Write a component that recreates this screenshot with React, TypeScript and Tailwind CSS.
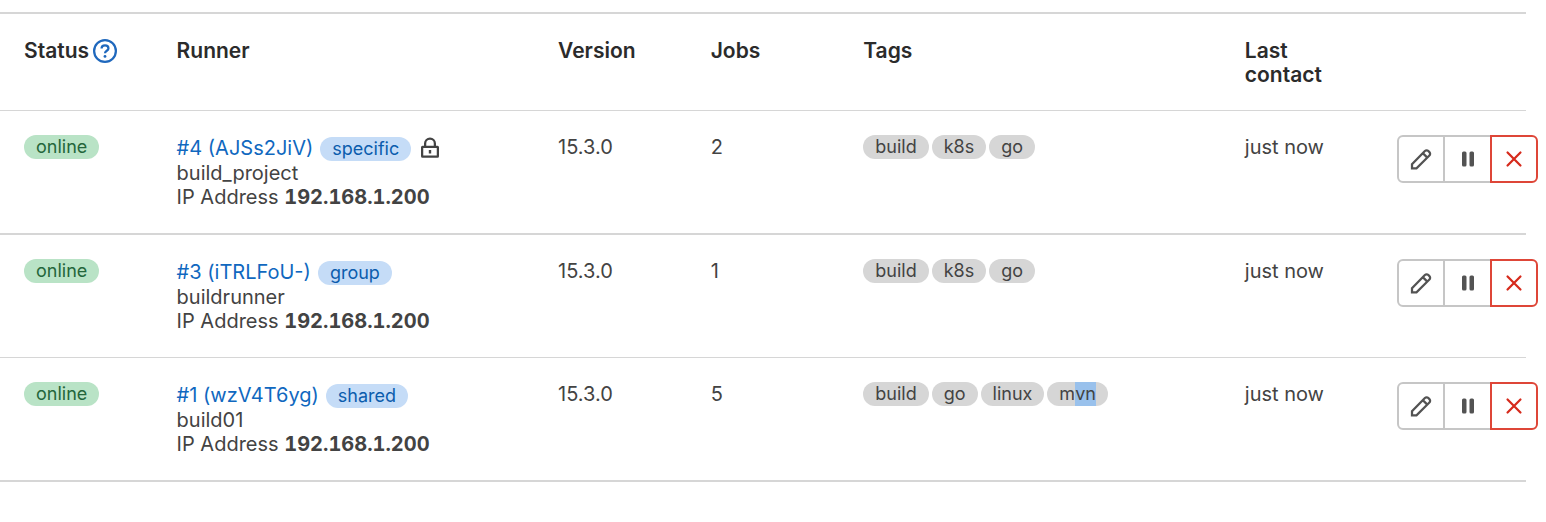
import React from "react";
import clsx from "clsx";

interface Runner {
  id: number;
  token: string;
  type: string;
  locked?: boolean;
  description: string;
  ip: string;
  version: string;
  jobs: number;
  tags: string[];
}

const runners: Runner[] = [
  {
    id: 4,
    token: "AJSs2JiV",
    type: "specific",
    locked: true,
    description: "build_project",
    ip: "192.168.1.200",
    version: "15.3.0",
    jobs: 2,
    tags: ["build", "k8s", "go"],
  },
  {
    id: 3,
    token: "iTRLFoU-",
    type: "group",
    description: "buildrunner",
    ip: "192.168.1.200",
    version: "15.3.0",
    jobs: 1,
    tags: ["build", "k8s", "go"],
  },
  {
    id: 1,
    token: "wzV4T6yg",
    type: "shared",
    description: "build01",
    ip: "192.168.1.200",
    version: "15.3.0",
    jobs: 5,
    tags: ["build", "go", "linux", "mvn"],
  },
];

const columns = [
  { label: "Status", width: "w-[10%]" },
  { label: "Runner", width: "w-[25%]" },
  { label: "Version", width: "w-[10%]" },
  { label: "Jobs", width: "w-[10%]" },
  { label: "Tags", width: "w-[25%]" },
  { label: "Last contact", width: "w-[10%]" },
  { label: "", width: "w-[10%]" },
];

function Icon({ children }: { children: React.ReactNode }) {
  return (
    <svg viewBox="0 0 16 16" className="size-6 shrink-0" fill="currentColor" aria-hidden="true">
      {children}
    </svg>
  );
}

function QuestionIcon() {
  return (
    <Icon>
      <circle cx="8" cy="8" r="7.25" fill="none" stroke="currentColor" strokeWidth="1.5" />
      <path
        d="M5.7 6.4C5.7 5 6.7 4.3 8 4.3s2.3.8 2.3 2c0 1.5-2.3 1.6-2.3 3.2"
        fill="none"
        stroke="currentColor"
        strokeWidth="1.5"
      />
      <circle cx="8" cy="11.6" r="0.95" />
    </Icon>
  );
}

function LockIcon() {
  return (
    <Icon>
      <path
        fillRule="evenodd"
        d="M8 1a4 4 0 0 0-4 4v1.5H3a1 1 0 0 0-1 1v6a1 1 0 0 0 1 1h10a1 1 0 0 0 1-1v-6a1 1 0 0 0-1-1h-1V5a4 4 0 0 0-4-4zm2.5 5.5V5a2.5 2.5 0 0 0-5 0v1.5h5zM3.5 8v5h9V8h-9zM7.2 9.4h1.6v2.2H7.2V9.4z"
      />
    </Icon>
  );
}

function PencilIcon() {
  return (
    <Icon>
      <path
        d="M2 14.2v-2.8L10.6 2.7a1.6 1.6 0 0 1 2.3 0l.7.7a1.6 1.6 0 0 1 0 2.3L5 14.2zM9.2 4.1l3 3"
        fill="none"
        stroke="currentColor"
        strokeWidth="1.5"
      />
    </Icon>
  );
}

function PauseIcon() {
  return (
    <Icon>
      <rect x="4" y="3" width="3" height="10" rx="1" />
      <rect x="9" y="3" width="3" height="10" rx="1" />
    </Icon>
  );
}

function CloseIcon() {
  return (
    <Icon>
      <path
        d="M3.7 3.7l8.6 8.6M12.3 3.7l-8.6 8.6"
        fill="none"
        stroke="currentColor"
        strokeWidth="1.5"
        strokeLinecap="round"
      />
    </Icon>
  );
}

function Badge({ className, children }: { className: string; children: React.ReactNode }) {
  return (
    <span className={clsx("inline-flex h-6 items-center rounded-full px-3 text-lg leading-6", className)}>
      {children}
    </span>
  );
}

function RunnerActions({ id }: { id: number }) {
  const button = "flex h-12 items-center justify-center border-2 bg-white";
  return (
    <div className="flex w-max" role="group" aria-label={`Actions for runner #${id}`}>
      <button type="button" aria-label="Edit" className={clsx(button, "w-12 rounded-l-md border-[#c6c6c6] text-[#535353]")}>
        <PencilIcon />
      </button>
      <button type="button" aria-label="Pause" className={clsx(button, "-ml-0.5 w-[49px] border-[#c6c6c6] text-[#535353]")}>
        <PauseIcon />
      </button>
      <button type="button" aria-label="Delete" className={clsx(button, "-ml-0.5 w-12 rounded-r-md border-[#de4638] text-[#d62a1c]")}>
        <CloseIcon />
      </button>
    </div>
  );
}

export default function App() {
  const cell = "border-b border-[#d6d6d6] py-6 pl-6 align-top group-odd:border-b-2";

  return (
    <main className="min-h-screen bg-white pt-3 pr-5 font-[Inter,sans-serif] text-xl leading-6 text-[#434343]">
      <table className="w-full table-fixed border-separate border-spacing-0 text-left">
        <thead>
          <tr>
            {columns.map((column) => (
              <th
                key={column.label}
                scope="col"
                className={clsx(
                  "border-t-2 border-b border-[#d6d6d6] pt-[25px] pb-[23px] pl-6 align-top text-[21px] leading-6 font-semibold text-[#2b2b2b]",
                  column.label === "Last contact" && "pr-6",
                  column.width
                )}
              >
                {column.label === "Status" ? (
                  <span className="flex items-center gap-1">
                    Status
                    <a href="#status-help" aria-label="Runner statuses" className="text-[#1f68bd]">
                      <QuestionIcon />
                    </a>
                  </span>
                ) : (
                  column.label
                )}
              </th>
            ))}
          </tr>
        </thead>
        <tbody>
          {runners.map((runner) => (
            <tr key={runner.id} className="group">
              <td className={cell}>
                <div className="flex">
                  <Badge className="bg-[#b9e3c6] text-[#24663b]">online</Badge>
                </div>
              </td>
              <td className={cell}>
                <div className="flex h-[26px] items-center gap-[7px]">
                  <a href={`#runner-${runner.id}`} className="text-[#1068bf]">
                    #{runner.id} ({runner.token})
                  </a>
                  <Badge className="self-end bg-[#c5dcf7] text-[#0b5cad]">{runner.type}</Badge>
                  {runner.locked && <LockIcon />}
                </div>
                <div>{runner.description}</div>
                <div>
                  IP Address <strong className="font-bold tabular-nums">{runner.ip}</strong>
                </div>
              </td>
              <td className={cell}>{runner.version}</td>
              <td className={cell}>{runner.jobs}</td>
              <td className={cell}>
                <div className="flex gap-[3px]">
                  {runner.tags.map((tag) => (
                    <Badge key={tag} className="bg-[#d6d6d6] text-[#434343]">
                      {tag === "mvn" ? (
                        <>
                          m<mark className="bg-[#99c1ec] text-inherit">vn</mark>
                        </>
                      ) : (
                        tag
                      )}
                    </Badge>
                  ))}
                </div>
              </td>
              <td className={cell}>just now</td>
              <td className={cell}>
                <RunnerActions id={runner.id} />
              </td>
            </tr>
          ))}
        </tbody>
      </table>
    </main>
  );
}
